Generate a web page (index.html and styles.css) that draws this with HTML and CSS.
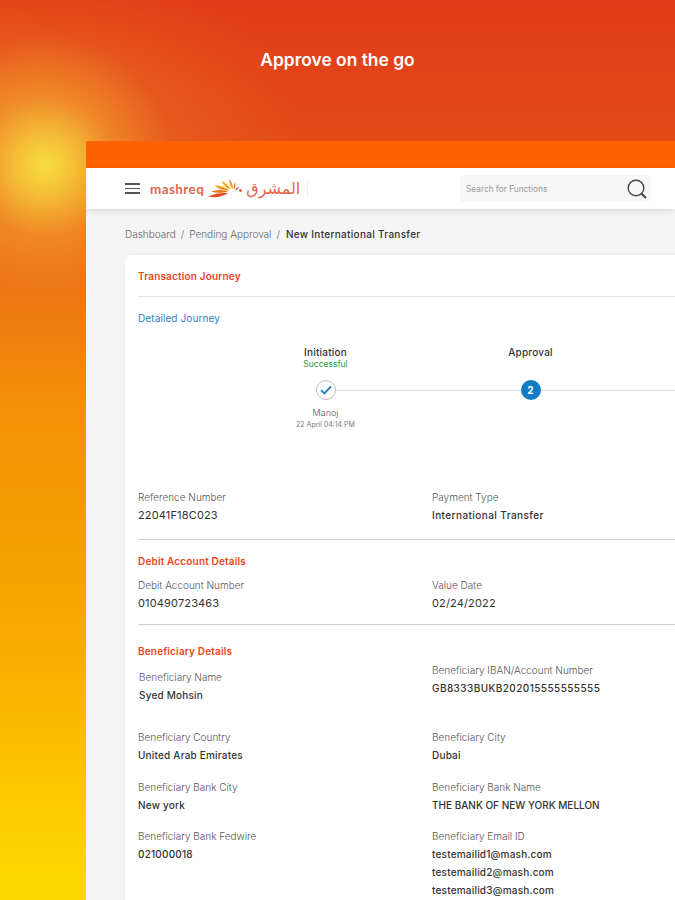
FILE: index.html
```html
<!DOCTYPE html>
<html lang="en">
<head>
  <meta charset="UTF-8" />
  <meta name="viewport" content="width=device-width, initial-scale=1.0"/>
  <title>Approve on the go</title>
  <link rel="stylesheet" href="styles.css">
</head>
<body>

  <!-- Hero -->
  <h1 class="hero-title">Approve on the go</h1>

  <div class="panel">
    <div class="panel-strip"></div>

    <!-- Header -->
    <header class="topbar">
      <div class="menu-icon"><span></span><span></span><span></span></div>
      <div class="logo">
        <span class="logo-latin">mashreq</span>
        <svg class="logo-sun" width="34" height="19" viewBox="0 0 34 19">
          <path d="M0 17.5 C7 14.5 13 13.5 20 14 C15 17.5 7 19.5 0 17.5Z" fill="#e8481c"/>
          <path d="M3 12.5 C9 10.5 15 10.5 20.5 12.5 C15 14 8 14.5 3 12.5Z" fill="#f0701a"/>
          <path d="M7 6.5 C12 6.5 17 8 21.5 11.5 C16 11.5 10 10.5 7 6.5Z" fill="#f59a18"/>
          <path d="M14 2 C18 4 21 7 23 10.5 C19 9.5 15 7 14 2Z" fill="#f5a818"/>
          <path d="M21.5 0 C24 3 25 6.5 24.8 10 C22.5 8 21 4 21.5 0Z" fill="#f39a18"/>
          <path d="M27.5 3.5 C27.8 6 27.3 8.5 26.2 10.8 C25 8.5 25.5 5.5 27.5 3.5Z" fill="#ee7a1a"/>
          <path d="M31 7.5 C30.5 9 29.3 10.5 27.5 11.8 C27.3 10 28.7 8.2 31 7.5Z" fill="#e8521c"/>
          <circle cx="32.4" cy="11.6" r="1.4" fill="#e8481c"/>
        </svg>
        <span class="logo-arabic" lang="ar">المشرق</span>
        <span class="logo-rule"></span>
      </div>
      <div class="search">
        <span class="search-text">Search for Functions</span>
        <svg width="22" height="22" viewBox="0 0 22 22" fill="none" stroke="#444" stroke-width="1.4">
          <circle cx="10" cy="10" r="7.8"/>
          <path d="M15.5 15.8 L20 20" stroke-width="2"/>
        </svg>
      </div>
    </header>

    <!-- Content -->
    <main class="content">
      <div class="breadcrumb">
        <span>Dashboard</span><i>/</i><span>Pending Approval</span><i>/</i><b>New International Transfer</b>
      </div>

      <section class="card">
        <h2 class="section-title">Transaction Journey</h2>
        <div class="rule"></div>
        <a class="journey-link">Detailed Journey</a>

        <div class="stepper">
          <div class="step">
            <div class="step-name">Initiation</div>
            <div class="step-status">Successful</div>
            <div class="step-dot done">
              <svg width="12" height="10" viewBox="0 0 12 10" fill="none" stroke="#1a7fc4" stroke-width="1.8"><path d="M1 5.2 L4.4 8.4 L11 1.4"/></svg>
            </div>
            <div class="step-user">Manoj</div>
            <div class="step-date">22 April 04:14 PM</div>
          </div>
          <div class="step">
            <div class="step-name">Approval</div>
            <div class="step-status"></div>
            <div class="step-dot current">2</div>
          </div>
        </div>

        <div class="field-grid">
          <div class="field"><label>Reference Number</label><p>22041F18C023</p></div>
          <div class="field"><label>Payment Type</label><p class="small wide">International Transfer</p></div>
        </div>
        <div class="rule rule-dark rule-ref"></div>

        <h2 class="section-title">Debit Account Details</h2>
        <div class="field-grid debit-grid">
          <div class="field"><label>Debit Account Number</label><p>010490723463</p></div>
          <div class="field"><label>Value Date</label><p>02/24/2022</p></div>
        </div>
        <div class="rule rule-dark rule-debit"></div>

        <h2 class="section-title">Beneficiary Details</h2>
        <div class="field-grid beneficiary-grid">
          <div class="field name-field"><label>Beneficiary Name</label><p class="small">Syed Mohsin</p></div>
          <div class="field"><label>Beneficiary IBAN/Account Number</label><p class="small wide">GB8333BUKB202015555555555</p></div>
          <div class="field"><label>Beneficiary Country</label><p class="small">United Arab Emirates</p></div>
          <div class="field"><label>Beneficiary City</label><p class="small">Dubai</p></div>
          <div class="field"><label>Beneficiary Bank City</label><p class="small">New york</p></div>
          <div class="field"><label>Beneficiary Bank Name</label><p class="small caps">THE BANK OF NEW YORK MELLON</p></div>
          <div class="field"><label>Beneficiary Bank Fedwire</label><p class="small">021000018</p></div>
          <div class="field">
            <label>Beneficiary Email ID</label>
            <p class="small">testemailid1@mash.com</p>
            <p class="small">testemailid2@mash.com</p>
            <p class="small">testemailid3@mash.com</p>
          </div>
        </div>
      </section>
    </main>
  </div>

</body>
</html>
```

FILE: styles.css
```css
html, body {
  height: 900px;
  overflow: hidden;
}

body {
  margin: 0;
  font-family: 'Inter', sans-serif;
  color: #333;
  background:
    radial-gradient(circle at 45px 165px, rgba(247,222,64,1) 0, rgba(247,208,60,0.85) 28px, rgba(245,170,50,0.5) 70px, rgba(240,130,40,0) 130px),
    radial-gradient(ellipse 300px 150px at 0 110px, rgba(238,125,35,0.65) 0, rgba(238,110,30,0) 100%),
    linear-gradient(to bottom, #e23a18 0, #e34a1a 130px, #ec7016 270px, #f39206 410px, #f6a600 610px, #fdc800 800px, #ffd800 880px);
}

.hero-title {
  margin: 0;
  height: 141px;
  padding-top: 47px;
  box-sizing: border-box;
  text-align: center;
  color: #fff;
  font-size: 17.4px;
  line-height: 25px;
  font-weight: 600;
}

.panel {
  margin-left: 86px;
  height: 759px;
  background-color: #f5f5f5;
  overflow: hidden;
}

.panel-strip {
  height: 27px;
  background-color: #ff6205;
}

.topbar {
  height: 41px;
  background-color: #fff;
  display: flex;
  align-items: center;
  padding: 0 24px 0 39px;
  box-shadow: 0 2px 6px rgba(0,0,0,0.12);
  position: relative;
}

.menu-icon {
  width: 15px;
  display: flex;
  flex-direction: column;
  gap: 3px;
  margin-right: 10px;
}

.menu-icon span {
  height: 1.5px;
  background-color: #555;
}

.logo {
  display: flex;
  align-items: center;
}

.logo-latin {
  font-family: 'Lato', sans-serif;
  font-size: 13.5px;
  font-weight: 700;
  color: #e4674a;
  letter-spacing: 0.4px;
}

.logo-sun {
  margin: 0 4px;
}

.logo-arabic {
  font-family: 'DejaVu Sans', sans-serif;
  font-size: 16px;
  line-height: 18px;
  color: #e4674a;
}

.logo-rule {
  width: 1px;
  height: 16px;
  margin-left: 7px;
  background-color: #eee;
}

.search {
  margin-left: auto;
  width: 191px;
  height: 27px;
  box-sizing: border-box;
  padding: 0 3px 0 6px;
  background-color: #f7f7f7;
  border-radius: 4px;
  display: flex;
  align-items: center;
  justify-content: space-between;
}

.search-text {
  font-size: 8.3px;
  color: #999;
}

.content {
  padding: 18px 0 0 39px;
}

.breadcrumb {
  display: flex;
  gap: 5px;
  font-size: 10px;
  line-height: 14px;
  font-weight: 300;
  color: #666;
}

.breadcrumb i {
  font-style: normal;
}

.breadcrumb b {
  margin-left: 1px;
  letter-spacing: 0.3px;
  color: #333;
  font-weight: 500;
}

.card {
  margin-top: 14px;
  width: 640px;
  height: 700px;
  padding: 14px 0 0 13px;
  box-sizing: border-box;
  background-color: #fff;
  border-radius: 6px 0 0 0;
  box-shadow: 0 0 5px rgba(0,0,0,0.05);
}

.section-title {
  margin: 0;
  font-size: 10px;
  line-height: 14px;
  letter-spacing: 0.17px;
  font-weight: 600;
  color: #f0441c;
}

.rule {
  height: 1px;
  background-color: #e4e4e4;
  margin-top: 13px;
}

.rule-dark {
  background-color: #d0d0d0;
  margin-bottom: 14px;
}

.rule-ref {
  margin-top: 17px;
}

.rule-debit {
  margin-top: 14px;
  margin-bottom: 19px;
}

.journey-link {
  display: block;
  margin-top: 14px;
  font-size: 10px;
  line-height: 14px;
  letter-spacing: 0.1px;
  color: #2a7fc0;
}

.stepper {
  display: flex;
  margin: 21px 0 0 85px;
  background: linear-gradient(#ddd, #ddd) no-repeat 112px 44px / 100% 1px;
}

.step {
  width: 205px;
  flex-shrink: 0;
  height: 144px;
  display: flex;
  flex-direction: column;
  align-items: center;
}

.step-name {
  font-size: 10px;
  line-height: 13px;
  letter-spacing: 0.2px;
  font-weight: 500;
  color: #333;
}

.step-status {
  height: 11px;
  font-size: 8.5px;
  line-height: 11px;
  color: #2c9a3c;
}

.step-dot {
  margin-top: 10px;
  width: 20px;
  height: 20px;
  box-sizing: border-box;
  border-radius: 50%;
  display: flex;
  align-items: center;
  justify-content: center;
  background-color: #fff;
}

.step-dot.done {
  border: 1px solid #bbb;
}

.step-dot.current {
  background-color: #0f7cc4;
  color: #fff;
  font-size: 10px;
  font-weight: 700;
}

.step-user {
  margin-top: 6px;
  font-size: 9px;
  line-height: 13px;
  font-weight: 300;
  color: #555;
}

.step-date {
  margin-top: 1px;
  font-size: 7px;
  line-height: 9px;
  color: #777;
}

.field-grid {
  display: grid;
  grid-template-columns: 294px 1fr;
}

.debit-grid {
  margin-top: 10px;
}

.beneficiary-grid {
  margin-top: 5px;
  row-gap: 17.5px;
}

.field label {
  display: block;
  font-size: 10px;
  line-height: 14px;
  font-weight: 300;
  color: #555;
}

.field p {
  margin: 4px 0 0;
  font-size: 11px;
  line-height: 14px;
  letter-spacing: 0.15px;
  font-weight: 400;
  color: #333;
}

.field p.small {
  font-size: 10px;
  letter-spacing: 0.2px;
  font-weight: 500;
}

.field p.wide {
  letter-spacing: 0.42px;
}

.field p.caps {
  letter-spacing: 0;
}

.name-field {
  padding: 7px 0 10.5px 1px;
}
```
